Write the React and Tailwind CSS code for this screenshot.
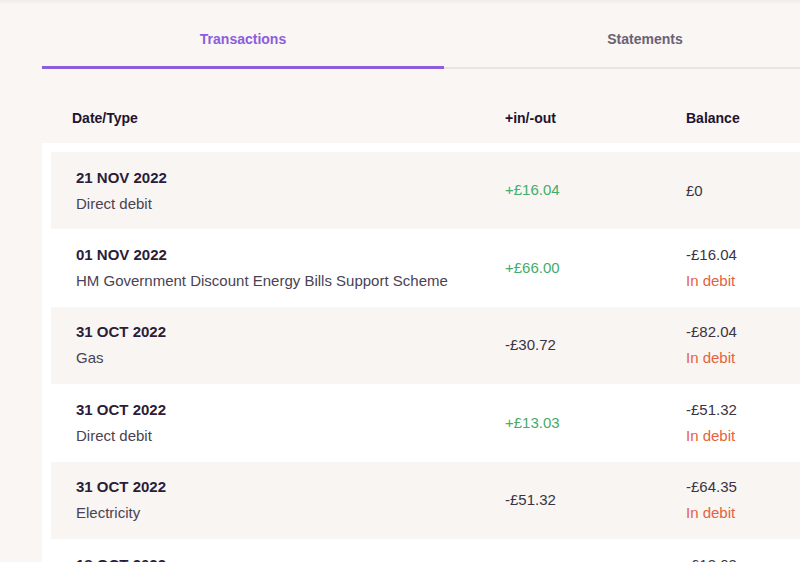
import React from 'react';

const rows = [
  { date: '21 NOV 2022', type: 'Direct debit', amount: '+£16.04', balance: '£0', debit: false },
  { date: '01 NOV 2022', type: 'HM Government Discount Energy Bills Support Scheme', amount: '+£66.00', balance: '-£16.04', debit: true },
  { date: '31 OCT 2022', type: 'Gas', amount: '-£30.72', balance: '-£82.04', debit: true },
  { date: '31 OCT 2022', type: 'Direct debit', amount: '+£13.03', balance: '-£51.32', debit: true },
  { date: '31 OCT 2022', type: 'Electricity', amount: '-£51.32', balance: '-£64.35', debit: true },
  { date: '18 OCT 2022', type: 'Direct debit', amount: '+£16.04', balance: '-£13.03', debit: true },
];

function Row({ row, index }) {
  const isIn = row.amount.startsWith('+');
  return (
    <div
      className={
        'grid grid-cols-[429px_181px_1fr] items-center h-[77.4px] pl-[25px] ' +
        (index % 2 === 0 ? 'bg-[#f8f5f2]' : 'bg-white')
      }
    >
      <div className="leading-[26px]">
        <div className="font-bold text-[15px] text-[#2b1d3a]">{row.date}</div>
        <div className="text-[15px] text-[#4a4252]">{row.type}</div>
      </div>
      <div className={'text-[15px] ' + (isIn ? 'text-[#45ac69]' : 'text-[#3b3344]')}>{row.amount}</div>
      <div className="leading-[26px] text-[15px]">
        <div className="text-[#3b3344]">{row.balance}</div>
        {row.debit && <div className="text-[#e5623f]">In debit</div>}
      </div>
    </div>
  );
}

export default function App() {
  return (
    <div
      className="w-[800px] h-[562px] overflow-hidden bg-[#f9f6f3]"
      style={{ fontFamily: '"Liberation Sans", Arial, sans-serif' }}
    >
      <div className="h-[4px] bg-gradient-to-b from-[#efebe7] to-[#f9f6f3]" />
      <div className="pl-[42px] w-[846px]">
        {/* tabs */}
        <div className="grid grid-cols-2">
          <div>
            <div className="pt-[25px] pb-[17px] text-center leading-[20px] text-[14px] font-bold text-[#8d5ddb]">
              Transactions
            </div>
            <div className="h-[3px] bg-[#8d5ddb]" />
          </div>
          <div>
            <div className="pt-[25px] pb-[17px] text-center leading-[20px] text-[14px] font-bold text-[#6b6273]">
              Statements
            </div>
            <div className="h-[3px] flex flex-col justify-end">
              <div className="h-[2px] bg-[#e7e4e1]" />
            </div>
          </div>
        </div>

        {/* header */}
        <div className="grid grid-cols-[433px_181px_1fr] pl-[30px] mt-[39px] leading-[20px] text-[14px] font-bold text-[#21132f]">
          <div>Date/Type</div>
          <div>+in/-out</div>
          <div>Balance</div>
        </div>

        {/* list */}
        <div className="mt-[15px] bg-white pt-[9px] pl-[9px]">
          {rows.map((r, i) => (
            <Row key={i} row={r} index={i} />
          ))}
        </div>
      </div>
    </div>
  );
}
